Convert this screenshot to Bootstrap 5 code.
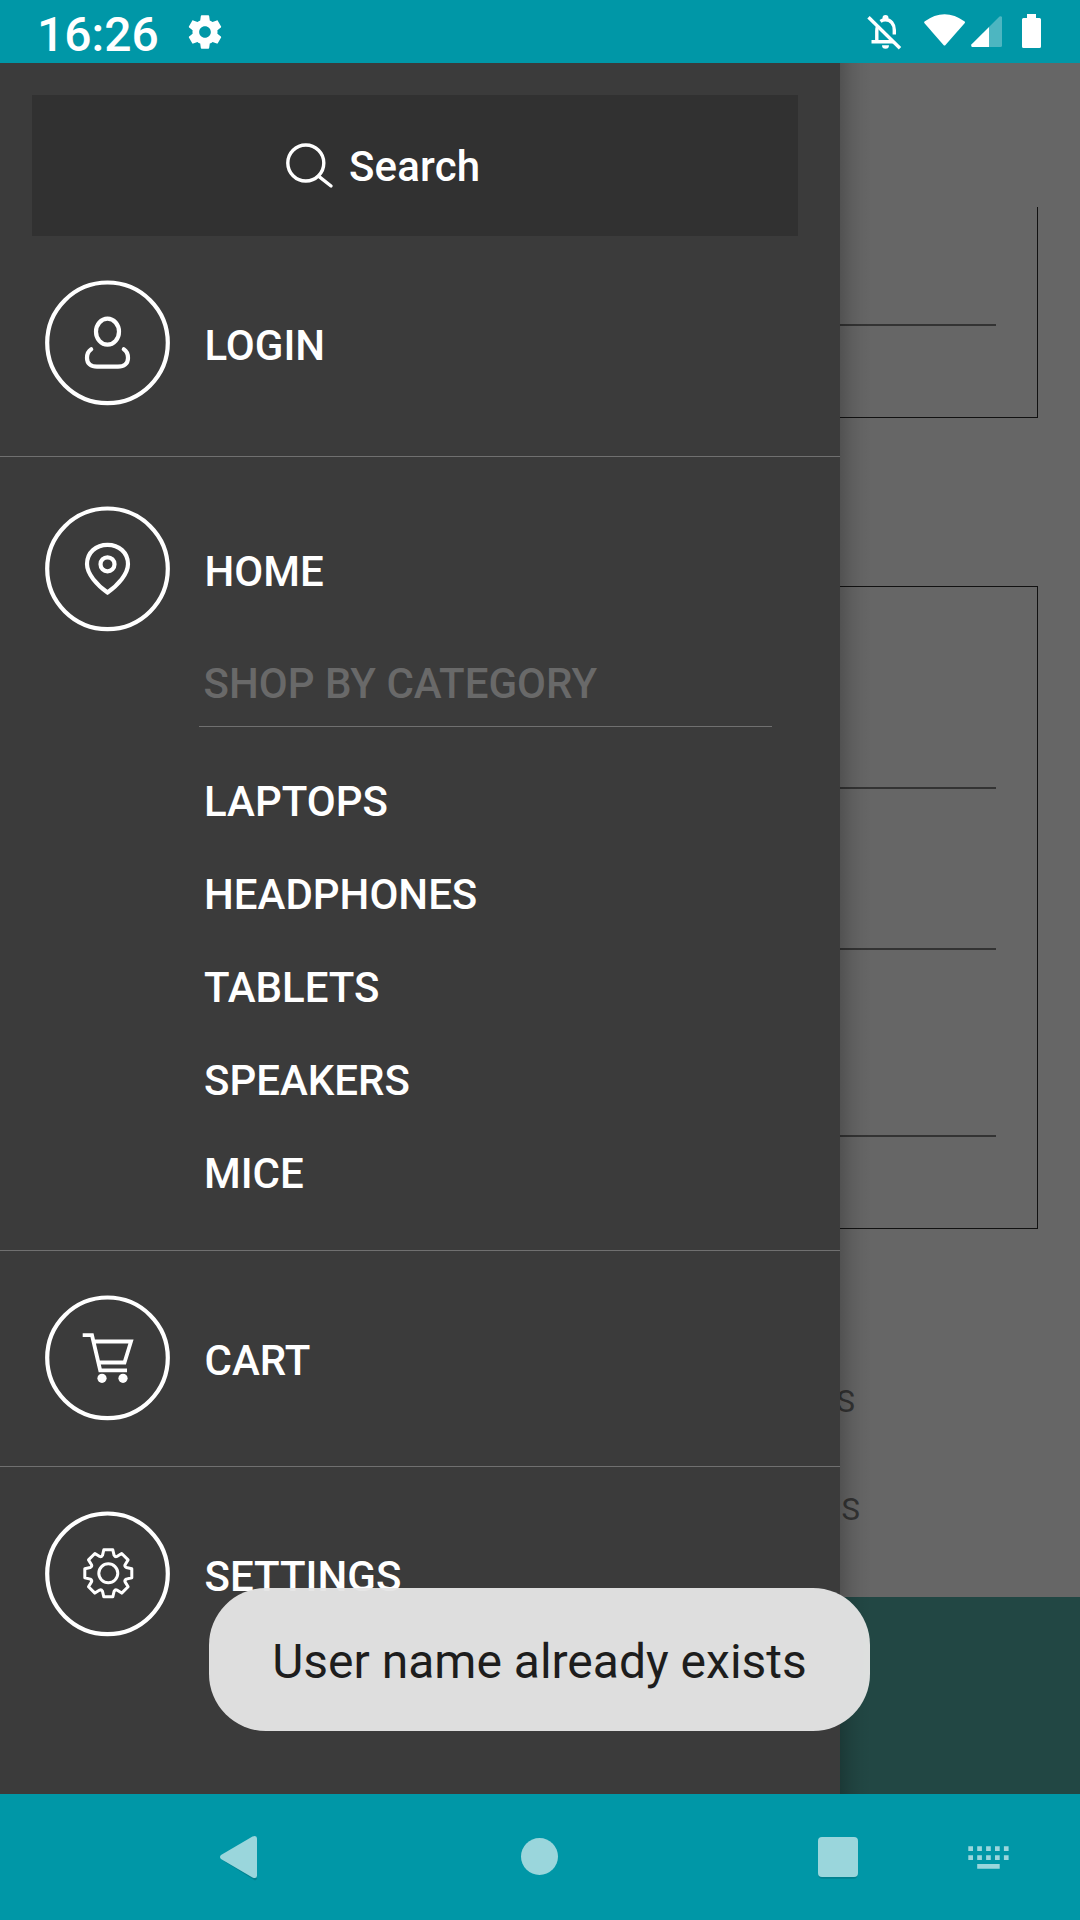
<!DOCTYPE html>
<html lang="en">
<head>
<meta charset="utf-8">
<meta name="viewport" content="width=device-width, initial-scale=1">
<title>Menu</title>
<link href="https://cdn.jsdelivr.net/npm/bootstrap@5.3.0/dist/css/bootstrap.min.css" rel="stylesheet">
<style>
  body { font-family: Roboto, "Liberation Sans", sans-serif; background: #666; }
  .screen { width: 1080px; height: 1920px; }
  .status-bar { height: 63px; background: #0097a7; padding: 0 39px 0 37px; }
  .clock { font-size: 48px; font-weight: 500; line-height: 60px; width: 124px; padding-top: 6px; }
  .nav-keys { height: 126px; background: #0097a7; }
  .content { background: #666; }

  /* registration form behind the drawer */
  .form-box { margin: 0 42px; width: 996px; border: 1px solid #111; padding: 0 41px; }
  .form-box.first { margin-top: 144px; height: 211px; border-top: 0; padding-top: 117px; }
  .form-box.second { margin-top: 168px; height: 643px; padding-top: 200px; }
  .field-line { height: 2px; background: #333; }
  .terms { font-size: 31px; line-height: 50px; color: #333; }
  .terms-a { width: 855px; margin-top: 148px; }
  .terms-b { width: 860px; margin-top: 58px; }
  .register { height: 197px; background: #224744; }

  .drawer { width: 840px; background: #3b3b3b; color: #fff; font-size: 42px; font-weight: 500; line-height: 50px; }
  .drawer-shadow { left: 840px; width: 32px; background: linear-gradient(90deg, rgba(0,0,0,.2), rgba(0,0,0,.09) 35%, rgba(0,0,0,.03) 65%, rgba(0,0,0,0)); }
  .search-box { margin: 32px 42px 0 32px; height: 141px; background: #313131; padding-left: 254px; gap: 16px; }
  .search-box span { padding-top: 2px; letter-spacing: .15px; }
  .entry { padding-left: 45px; height: 125px; gap: 34.500px; }
  .entry span { padding-top: 6px; }
  .rule { height: 1px; background: #707070; }
  .categories { margin-left: 199px; width: 573px; }
  .categories-title { color: #696969; padding-left: 4.500px; height: 67px; margin-top: 28px; }
  .category { height: 93px; padding-left: 5px; }

  .toast-pill { left: 209px; top: 1588px; width: 661px; height: 143px; padding-top: 4px; border-radius: 57px; background: rgba(229,229,229,.96); color: #1d1d1d; font-size: 48px; line-height: 58px; }
  svg { display: block; flex: none; overflow: visible; }
</style>
</head>
<body>
<div class="screen position-relative d-flex flex-column overflow-hidden">

  <header class="status-bar d-flex align-items-center text-white">
    <div class="clock">16:26</div>
    <svg class="ms-4" width="40" height="40" viewBox="0 0 24 24" fill="#fff"><path d="M19.43 12.98c.04-.32.07-.64.07-.98s-.03-.66-.07-.98l2.11-1.65c.19-.15.24-.42.12-.64l-2-3.46c-.12-.22-.39-.3-.61-.22l-2.49 1c-.52-.4-1.08-.73-1.69-.98l-.38-2.65C14.46 2.18 14.25 2 14 2h-4c-.25 0-.46.18-.49.42l-.38 2.65c-.61.25-1.17.59-1.69.98l-2.49-1c-.23-.09-.49 0-.61.22l-2 3.46c-.13.22-.07.49.12.64l2.11 1.65c-.04.32-.07.65-.07.98s.03.66.07.98l-2.11 1.65c-.19.15-.24.42-.12.64l2 3.46c.12.22.39.3.61.22l2.49-1c.52.4 1.08.73 1.69.98l.38 2.65c.03.24.24.42.49.42h4c.25 0 .46-.18.49-.42l.38-2.65c.61-.25 1.17-.59 1.69-.98l2.49 1c.23.09.49 0 .61-.22l2-3.46c.12-.22.07-.49-.12-.64l-2.11-1.65zM12 15.5c-1.93 0-3.5-1.57-3.5-3.5s1.57-3.5 3.5-3.5 3.5 1.57 3.5 3.5-1.57 3.5-3.5 3.5z"/></svg>
    <svg class="ms-auto" width="174" height="36" viewBox="867 14 174 36">
      <g fill="none" stroke="#fff" stroke-width="3.4">
        <path d="M868.5 17.2 900 48.3"/>
        <path d="M871.500 41.800H893M876.800 42V31C876.800 28.800 877.300 27 878 25.500M880.500 21.300C882 20.200 883.600 19.700 885.500 19.700C890.700 19.700 894.300 24 894.300 30V34.500"/>
      </g>
      <g fill="#fff"><circle cx="885.500" cy="18" r="3"/><path d="M882 45.200H889A3.500 3.600 0 0 1 882 45.200Z"/>
        <path d="M924.500 21.600Q944.500 7 964.700 21.600Q965.300 22.200 964.800 23L945.500 45Q944.500 46 943.500 45L924.300 23Q923.900 22.200 924.500 21.600Z"/>
        <path d="M989 27V47H972Q970.600 46 971.400 44.500Z"/>
        <path opacity=".3" d="M989 27 999.500 16.600Q1001 15.600 1002 17V45.500Q1002 47 1000.500 47H989Z"/>
        <path d="M1027 14H1036V18H1039.500Q1041 18 1041 19.500V46.500Q1041 48 1039.500 48H1023.500Q1022 48 1022 46.500V19.500Q1022 18 1023.500 18H1027Z"/></g>
    </svg>
  </header>

  <main class="content position-relative flex-grow-1 d-flex flex-column">
    <section class="form-box first"><div class="field-line"></div></section>
    <section class="form-box second">
      <div class="field-line"></div>
      <div class="field-line" style="margin-top:159px"></div>
      <div class="field-line" style="margin-top:185px"></div>
    </section>
    <div class="terms terms-a text-end">S</div>
    <div class="terms terms-b text-end">S</div>
    <div class="register mt-auto"></div>

    <div class="drawer-shadow position-absolute top-0 bottom-0"></div>
    <aside class="drawer position-absolute top-0 start-0 bottom-0">
      <div class="search-box d-flex align-items-center">
        <svg width="47" height="44" viewBox="0 0 47 44" fill="none" stroke="#fff" stroke-width="3.400"><circle cx="19.800" cy="19" r="18"/><path d="M32.500 32.200 45 42" stroke-linecap="round"/></svg>
        <span>Search</span>
      </div>

      <div class="entry d-flex align-items-center" style="margin-top:44px">
        <svg width="125" height="125" viewBox="0 0 125 125" fill="none" stroke="#fff" stroke-width="4.200" stroke-linecap="round"><circle cx="62.500" cy="62.800" r="60.300"/><ellipse cx="62.500" cy="51.700" rx="11.500" ry="13"/><path d="M46.200 69.300C43.500 71 42 74 42 78C42 83.500 46 86.700 52 86.700H73C79 86.700 83 83.500 83 78C83 74 81.500 71 78.800 69.300"/></svg>
        <span>LOGIN</span>
      </div>
      <div class="rule" style="margin-top:51px"></div>

      <div class="entry d-flex align-items-center" style="margin-top:49px">
        <svg width="125" height="125" viewBox="0 0 125 125" fill="none" stroke="#fff" stroke-width="4.200"><circle cx="62.500" cy="62.800" r="60.300"/><circle cx="62.500" cy="58.300" r="7"/><path d="M62.500 86.500C52 79 42 68 42 58C42 46.500 51 38.800 62.500 38.800S83 46.500 83 58C83 68 73 79 62.500 86.500Z"/></svg>
        <span>HOME</span>
      </div>
      <div class="categories">
        <div class="categories-title">SHOP BY CATEGORY</div>
        <div class="rule"></div>
        <div style="padding-top:28px">
          <div class="category d-flex align-items-center">LAPTOPS</div>
          <div class="category d-flex align-items-center">HEADPHONES</div>
          <div class="category d-flex align-items-center">TABLETS</div>
          <div class="category d-flex align-items-center">SPEAKERS</div>
          <div class="category d-flex align-items-center">MICE</div>
        </div>
      </div>
      <div class="rule" style="margin-top:30px"></div>

      <div class="entry d-flex align-items-center" style="margin-top:44px">
        <svg width="125" height="125" viewBox="0 0 125 125" fill="none" stroke="#fff" stroke-width="4.200"><circle cx="62.500" cy="62.800" r="60.300"/><path d="M37.700 40.200H47L55.200 75.300H82M48.500 46.500H86L79.500 67.500H53.500" stroke-width="3.800"/><g fill="#fff" stroke="none"><circle cx="57" cy="83.300" r="4.600"/><circle cx="78" cy="83.300" r="4.600"/></g></svg>
        <span>CART</span>
      </div>
      <div class="rule" style="margin-top:46px"></div>

      <div class="entry d-flex align-items-center" style="margin-top:44px">
        <svg width="125" height="125" viewBox="0 0 125 125" fill="none" stroke="#fff"><circle cx="62.500" cy="62.800" r="60.300" stroke-width="4.200"/><g transform="translate(63.300 62.300)" stroke-width="3" stroke-linejoin="round"><circle r="9.500"/><path d="M-4.500-23.500H4.500L5.800-18Q7-16 8.600-16.800L13.400-19.800L19.800-13.400L16.800-8.600Q16-7 18-5.800L23.500-4.500V4.500L18 5.800Q16 7 16.800 8.600L19.800 13.400L13.400 19.800L8.600 16.800Q7 16 5.800 18L4.500 23.500H-4.500L-5.800 18Q-7 16-8.600 16.800L-13.400 19.800L-19.800 13.400L-16.800 8.600Q-16 7-18 5.800L-23.500 4.500V-4.500L-18-5.800Q-16-7-16.800-8.600L-19.800-13.400L-13.400-19.800L-8.600-16.800Q-7-16-5.800-18Z"/></g></svg>
        <span>SETTINGS</span>
      </div>
    </aside>
  </main>

  <footer class="nav-keys">
    <svg width="1080" height="126" viewBox="0 1794 1080 126">
      <g fill="#006f7c" opacity=".55"><path d="M222 1860 255 1880.500 257 1879V1876Z"/><rect x="818.500" y="1839" width="39" height="39.800" rx="4"/></g>
      <g fill="#9ad6dc">
        <path d="M221 1855 252.500 1836.500Q257 1834.800 257 1838.500V1875.500Q257 1879.200 252.500 1877.500L221 1859Q219 1857 221 1855Z"/>
        <circle cx="539.500" cy="1856.500" r="18.500"/>
        <rect x="818" y="1837" width="40" height="40" rx="4"/>
        <path d="M968.300 1846.300h4.700v4.700h-4.700zM977.200 1846.300h4.700v4.700h-4.700zM986.100 1846.300h4.700v4.700h-4.700zM995 1846.300h4.700v4.700h-4.700zM1003.900 1846.300h4.700v4.700h-4.700zM968.300 1855.200h4.700v4.700h-4.700zM977.200 1855.200h4.700v4.700h-4.700zM986.100 1855.200h4.700v4.700h-4.700zM995 1855.200h4.700v4.700h-4.700zM1003.900 1855.200h4.700v4.700h-4.700zM977.200 1864.100h22.500v4.700h-22.500z"/>
      </g>
    </svg>
  </footer>

  <div class="toast-pill position-absolute d-flex align-items-center justify-content-center text-nowrap">User name already exists</div>
</div>
<script src="https://cdn.jsdelivr.net/npm/bootstrap@5.3.0/dist/js/bootstrap.bundle.min.js"></script>
</body>
</html>
